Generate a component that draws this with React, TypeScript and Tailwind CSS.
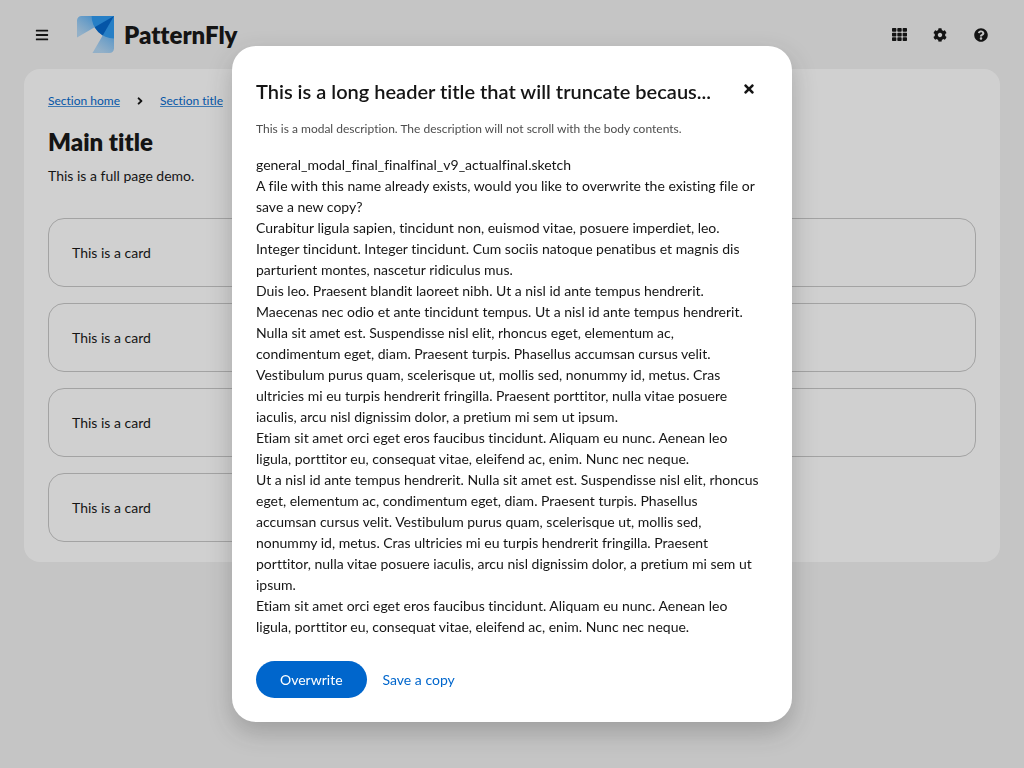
import type { ReactNode } from 'react';
import { FaAngleRight, FaBars, FaCog, FaQuestionCircle, FaTh, FaTimes } from 'react-icons/fa';

const CARD_COUNT = 10;

const PARAGRAPHS: string[][] = [
  ['general_modal_final_finalfinal_v9_actualfinal.sketch'],
  [
    'A file with this name already exists, would you like to overwrite the existing file or',
    'save a new copy?',
  ],
  [
    'Curabitur ligula sapien, tincidunt non, euismod vitae, posuere imperdiet, leo.',
    'Integer tincidunt. Integer tincidunt. Cum sociis natoque penatibus et magnis dis',
    'parturient montes, nascetur ridiculus mus.',
  ],
  [
    'Duis leo. Praesent blandit laoreet nibh. Ut a nisl id ante tempus hendrerit.',
    'Maecenas nec odio et ante tincidunt tempus. Ut a nisl id ante tempus hendrerit.',
    'Nulla sit amet est. Suspendisse nisl elit, rhoncus eget, elementum ac,',
    'condimentum eget, diam. Praesent turpis. Phasellus accumsan cursus velit.',
    'Vestibulum purus quam, scelerisque ut, mollis sed, nonummy id, metus. Cras',
    'ultricies mi eu turpis hendrerit fringilla. Praesent porttitor, nulla vitae posuere',
    'iaculis, arcu nisl dignissim dolor, a pretium mi sem ut ipsum.',
  ],
  [
    'Etiam sit amet orci eget eros faucibus tincidunt. Aliquam eu nunc. Aenean leo',
    'ligula, porttitor eu, consequat vitae, eleifend ac, enim. Nunc nec neque.',
  ],
  [
    'Ut a nisl id ante tempus hendrerit. Nulla sit amet est. Suspendisse nisl elit, rhoncus',
    'eget, elementum ac, condimentum eget, diam. Praesent turpis. Phasellus',
    'accumsan cursus velit. Vestibulum purus quam, scelerisque ut, mollis sed,',
    'nonummy id, metus. Cras ultricies mi eu turpis hendrerit fringilla. Praesent',
    'porttitor, nulla vitae posuere iaculis, arcu nisl dignissim dolor, a pretium mi sem ut',
    'ipsum.',
  ],
  [
    'Etiam sit amet orci eget eros faucibus tincidunt. Aliquam eu nunc. Aenean leo',
    'ligula, porttitor eu, consequat vitae, eleifend ac, enim. Nunc nec neque.',
  ],
];

function IconButton({ label, children }: { label: string; children: ReactNode }) {
  return (
    <button
      type="button"
      aria-label={label}
      className="flex size-[37px] shrink-0 items-center rounded-md pl-[11px] text-sm text-[#151515]"
    >
      {children}
    </button>
  );
}

function Logo() {
  return (
    <svg viewBox="0 0 37 37" className="size-[37px] shrink-0" aria-hidden="true">
      <defs>
        <linearGradient id="wing-bottom" x1="0.68" y1="0.02" x2="0.32" y2="0.92">
          <stop offset="0" stopColor="#2b9af3" />
          <stop offset="1" stopColor="#73bcf7" stopOpacity="0.5" />
        </linearGradient>
        <linearGradient id="wing-left" x1="0.9" y1="0.1" x2="0.05" y2="0.75">
          <stop offset="0" stopColor="#2b9af3" />
          <stop offset="1" stopColor="#73bcf7" stopOpacity="0.5" />
        </linearGradient>
      </defs>
      <path d="M37 0V32.5A4.5 4.5 0 0 1 32.5 37H15.5Z" fill="url(#wing-bottom)" />
      <path d="M37 0H4.5A4.5 4.5 0 0 0 0 4.5V21.5Z" fill="url(#wing-left)" />
      <path d="M37 0H14.6A22.4 22.4 0 0 0 37 22.4Z" fill="#2b9af3" />
      <path d="M37 0L17.6 11.3A22.4 22.4 0 0 0 25.7 19.4Z" fill="#0066cc" />
    </svg>
  );
}

export default function App() {
  return (
    <div className="min-h-screen bg-[#f2f2f2] font-['Lato','Liberation_Sans',sans-serif] text-sm leading-[21px] text-[#151515] [font-variant-ligatures:none]">
      <header className="flex h-[69px] items-center gap-4 px-6">
        <IconButton label="Global navigation">
          <FaBars />
        </IconButton>
        <a href="#home" className="flex items-center gap-2.5">
          <Logo />
          <span className="text-2xl font-extrabold">PatternFly</span>
        </a>
        <div className="ml-auto flex gap-1">
          <IconButton label="Applications">
            <FaTh className="size-[15px]" />
          </IconButton>
          <IconButton label="Settings">
            <FaCog />
          </IconButton>
          <IconButton label="Help">
            <FaQuestionCircle />
          </IconButton>
        </div>
      </header>

      <main className="mx-6 rounded-2xl bg-white px-6 pt-[23px] pb-5">
        <nav aria-label="Breadcrumb">
          <ol className="flex items-center text-xs leading-[18px] text-[#0066cc]">
            <li>
              <a href="#section-home" className="underline decoration-[#0066cc]/70 underline-offset-1">
                Section home
              </a>
            </li>
            <li className="flex items-center">
              <FaAngleRight className="mx-3.5 text-[#151515]" aria-hidden="true" />
              <a href="#section-title" className="underline decoration-[#0066cc]/70 underline-offset-1">
                Section title
              </a>
            </li>
          </ol>
        </nav>
        <h1 className="mt-4 text-2xl leading-[31px] font-extrabold">Main title</h1>
        <p className="mt-2">This is a full page demo.</p>
        <div className="mt-8 grid grid-cols-[repeat(auto-fill,minmax(250px,1fr))] gap-4">
          {Array.from({ length: CARD_COUNT }, (_, index) => (
            <article key={index} className="rounded-2xl border border-[#c7c7c7] p-[23px]">
              This is a card
            </article>
          ))}
        </div>
      </main>

      <div className="fixed inset-0 flex items-center justify-center bg-[#151515]/20 p-4">
        <div
          role="dialog"
          aria-modal="true"
          aria-labelledby="modal-title"
          aria-describedby="modal-description"
          className="w-full max-w-[560px] rounded-3xl bg-white px-6 pt-6 pb-6 shadow-[0_10px_24px_rgba(41,41,41,0.25)]"
        >
          <div className="flex justify-between">
            <h2 id="modal-title" className="truncate pt-2 text-xl leading-[26px] font-semibold">
              This is a long header title that will truncate becaus...
            </h2>
            <div className="h-[34px]">
              <IconButton label="Close">
                <FaTimes />
              </IconButton>
            </div>
          </div>
          <p id="modal-description" className="mt-4 text-xs leading-[18px] text-[#4d4d4d]">
            This is a modal description. The description will not scroll with the body contents.
          </p>
          <div className="mt-4">
            {PARAGRAPHS.map((lines, index) => (
              <p key={index}>
                {lines.map((line) => (
                  <span key={line} className="block">
                    {line}
                  </span>
                ))}
              </p>
            ))}
          </div>
          <div className="mt-6 flex items-center gap-4">
            <button type="button" className="rounded-full bg-[#0066cc] px-6 py-2 text-white">
              Overwrite
            </button>
            <button type="button" className="py-2 text-[#0066cc]">
              Save a copy
            </button>
          </div>
        </div>
      </div>
    </div>
  );
}
